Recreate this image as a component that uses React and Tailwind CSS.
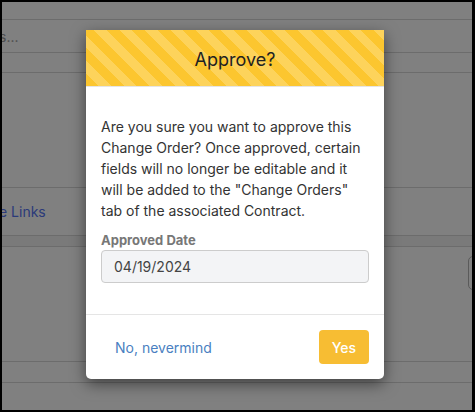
export default function App() {
  return (
    <div className="w-[475px] h-[412px] bg-black pt-[2px] pl-[2px] pr-[3px] pb-[2px] font-['Inter',sans-serif]">
      <div className="relative w-full h-full bg-[#808080] overflow-hidden">
        {/* page behind the backdrop */}
        <div className="flex flex-col">
          <div className="h-[18px] border-b border-[#6c6c6c]" />
          <div className="h-[33px] border-b border-[#6c6c6c] flex items-center">
            <span className="-ml-[3px] text-[14px] text-[#4d4d4d]">s...</span>
          </div>
          <div className="h-[20px] border-b border-[#6c6c6c]" />
          <div className="h-[115px] border-b border-[#6c6c6c]" />
          <div className="h-[48px] border-b border-[#6c6c6c] flex items-center">
            <span className="-ml-[3px] text-[14px] text-[#2b3a7a]">e Links</span>
          </div>
          <div className="h-[11px] border-b border-[#6c6c6c] bg-[#7a7a7a]" />
          <div className="h-[115px] border-b border-[#6c6c6c] flex justify-end pt-[9px]">
            <div className="w-[10px] h-[34px] -mr-[6px] rounded-[5px] border border-[#5a5a5a]" />
          </div>
          <div className="h-[21px] border-b border-[#6c6c6c]" />
        </div>

        {/* modal */}
        <div className="absolute left-[84px] top-[28px] w-[298px] bg-white rounded-b-[5px] shadow-[0_5px_15px_rgba(0,0,0,0.5)]">
          <div className="h-[57px] flex items-center justify-center border-b border-[#e5e5e5] bg-[repeating-linear-gradient(45deg,#fcc62f_0_9px,#fdd35b_9px_18px)]">
            <h2 className="text-[18px] text-[#222] pt-[2px]">Approve?</h2>
          </div>
          <div className="pt-[29px] pb-[31px] px-[15px] border-b border-[#e5e5e5]">
            <p className="whitespace-nowrap text-[14px] leading-[21px] text-[#333]">
              Are you sure you want to approve this
              <br />
              Change Order? Once approved, certain
              <br />
              fields will no longer be editable and it
              <br />
              will be added to the "Change Orders"
              <br />
              tab of the associated Contract.
            </p>
            <label className="block mt-[10px] text-[13px] leading-[18px] font-bold text-[#777]">
              Approved Date
            </label>
            <input
              className="mt-[1px] w-full h-[33px] px-[12px] rounded-[4px] border border-[#ccc] bg-[#f3f4f6] text-[14px] text-[#444] outline-none"
              defaultValue="04/19/2024"
              readOnly
            />
          </div>
          <div className="h-[64px] flex items-center justify-between px-[15px]">
            <button className="px-[14px] text-[14px] text-[#4a7fc1]">No, nevermind</button>
            <button className="w-[50px] h-[34px] rounded-[4px] bg-[#f7bd33] text-[14px] font-medium text-white">
              Yes
            </button>
          </div>
        </div>
      </div>
    </div>
  );
}
